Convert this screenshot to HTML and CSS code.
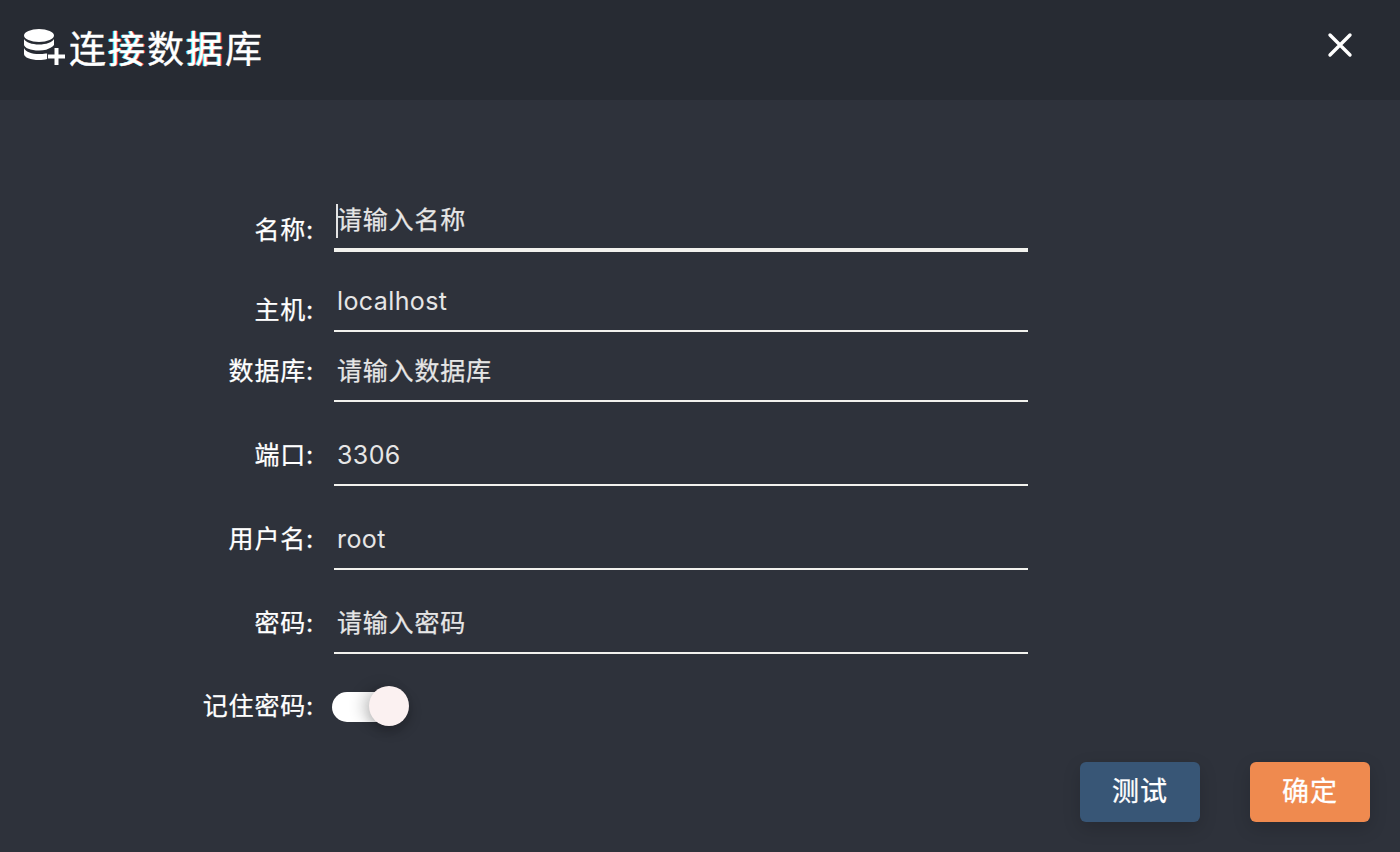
FILE: index.html
```html
<!DOCTYPE html>
<html lang="zh-CN">
<head>
<meta charset="utf-8">
<title>连接数据库</title>
<link rel="stylesheet" href="styles.css">
</head>
<body>
<div class="dialog">
  <header class="head">
    <div class="title">
      <svg class="db-icon" width="42" height="36" viewBox="0 0 42 36" aria-hidden="true">
        <ellipse cx="16" cy="6.500" rx="15" ry="6.500" fill="#fff"/>
        <path fill="#fff" d="M1 10v5.500c0 3.400 6.700 6 15 6 2.600 0 5-.25 7.200-.75C26 19.500 29.500 18 31 16V10c-1.800 3.300-8 5.500-15 5.500S2.800 13.300 1 10z"/>
        <path fill="#fff" d="M1 19v6c0 3.400 6.700 6 15 6 3 0 5.800-.35 8.100-.95V24.500h-1.500c-2 .35-4.300.5-6.600.5-7 0-13.200-2-15-6z"/>
        <path fill="#fff" d="M31.500 19h4v6.500H42v4h-6.500V36h-4v-6.500H25v-4h6.500z"/>
      </svg>
      <h1 class="title-text">连<span class="glitch">接</span>数<span class="glitch">据</span>库</h1>
    </div>
    <svg class="close" width="26" height="26" viewBox="0 0 26 26" aria-hidden="true">
      <path d="M3 3 23 23M23 3 3 23" stroke="#fff" stroke-width="3.400" stroke-linecap="round"/>
    </svg>
  </header>
  <main class="body">
    <form class="form">
      <div class="row row-name">
        <label class="label">名称:</label>
        <div class="field field-active"><span class="caret"></span><span class="value cjk">请输入名称</span></div>
      </div>
      <div class="row row-host">
        <label class="label">主机:</label>
        <div class="field"><span class="value">localhost</span></div>
      </div>
      <div class="row row-db">
        <label class="label">数据库:</label>
        <div class="field"><span class="value cjk">请输入数据库</span></div>
      </div>
      <div class="row">
        <label class="label">端口:</label>
        <div class="field"><span class="value">3306</span></div>
      </div>
      <div class="row">
        <label class="label">用户名:</label>
        <div class="field"><span class="value">root</span></div>
      </div>
      <div class="row">
        <label class="label">密码:</label>
        <div class="field"><span class="value cjk">请输入密码</span></div>
      </div>
      <div class="row row-switch">
        <label class="label label-switch">记住密码:</label>
        <div class="switch"><span class="track"></span><span class="knob"></span></div>
      </div>
    </form>
    <footer class="actions">
      <button class="btn btn-test" type="button">测试</button>
      <button class="btn btn-ok" type="button">确定</button>
    </footer>
  </main>
</div>
</body>
</html>
```
FILE: styles.css
```css
* { box-sizing: border-box; }
html, body { margin: 0; height: 100%; }
body {
  background: #2e323b;
  color: #fff;
  font-family: Inter, "Noto Sans CJK SC", sans-serif;
  overflow: hidden;
}
.dialog { width: 1400px; height: 852px; display: flex; flex-direction: column; }
.head {
  height: 100px;
  flex: none;
  background: #272b33;
  display: flex;
  align-items: center;
  justify-content: space-between;
  padding: 0 47px 10px 23px;
}
.title { display: flex; align-items: center; gap: 4px; }
.db-icon { margin-top: 4px; }
.title-text {
  margin: 0;
  padding-top: 4px;
  font-size: 37px;
  font-weight: 400;
  -webkit-text-stroke: 0.4px #fff;
  line-height: 50px;
  letter-spacing: 2px;
  font-family: "Noto Sans CJK SC", sans-serif;
}
.glitch { text-shadow: -1px 0 #25e8e8, 1px 0 #f0304a; }
.close { display: block; }
.body { flex: 1; display: flex; flex-direction: column; padding-top: 90px; }
.form { display: flex; flex-direction: column; gap: 24px; }
.row {
  display: grid;
  grid-template-columns: 314px 694px;
  column-gap: 20px;
  align-items: start;
}
.row-host { margin-top: -4px; }
.row-db { margin-top: -14px; }
.row-switch { margin-top: 8px; align-items: center; }
.label {
  text-align: right;
  font-size: 25px;
  font-weight: 400;
  -webkit-text-stroke: 0.25px #fff;
  line-height: 30px;
  letter-spacing: 0.800px;
  margin-top: 14px;
  color: #fff;
  font-family: Inter, "Noto Sans CJK SC", sans-serif;
}
.row-name .label { margin-top: 25px; }
.row-host .label { margin-top: 23px; }
.row-switch .label { margin-top: 0; }
.field {
  position: relative;
  height: 60px;
  border-bottom: 2px solid #f2f2ee;
  display: flex;
  align-items: center;
  padding-left: 3px;
}
.field-active { height: 62px; border-bottom-width: 4px; }
.field-active .value { position: relative; top: 1px; }
.value {
  font-size: 25px;
  letter-spacing: 0.400px;
  color: #e6e6e6;
  line-height: 30px;
}
.cjk {
  font-weight: 400;
  -webkit-text-stroke: 0.25px #e6e6e6;
  letter-spacing: 0.800px;
  margin-top: -1px;
}
.caret {
  position: absolute;
  left: 2px;
  top: 14px;
  width: 2px;
  height: 34px;
  background: #e4e4e4;
}
.switch {
  position: relative;
  width: 77px;
  height: 40px;
  margin-left: -2px;
}
.track {
  position: absolute;
  left: 0;
  top: 6px;
  width: 62px;
  height: 30px;
  border-radius: 15px;
  background: #fff;
}
.knob {
  position: absolute;
  left: 37px;
  top: 0;
  width: 40px;
  height: 40px;
  border-radius: 50%;
  background: #fbf1f1;
  box-shadow: -8px 0 14px rgba(0, 0, 0, 0.16), 2px 6px 12px rgba(0, 0, 0, 0.2);
}
.actions {
  display: flex;
  justify-content: flex-end;
  gap: 50px;
  padding: 36px 30px 0 0;
}
.btn {
  width: 120px;
  height: 60px;
  border: 0;
  border-radius: 6px;
  color: #fff;
  font-size: 27px;
  font-weight: 400;
  -webkit-text-stroke: 0.3px #fff;
  letter-spacing: 1px;
  font-family: "Noto Sans CJK SC", sans-serif;
  box-shadow: 0 6px 18px rgba(0, 0, 0, 0.16);
  padding: 0 0 5px;
}
.btn-test { background: #385676; }
.btn-ok { background: #ef8a4f; }
```
